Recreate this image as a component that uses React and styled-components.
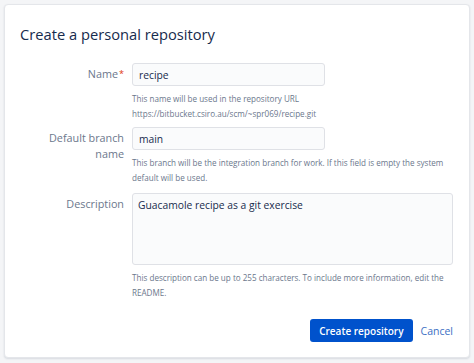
import React from 'react';
import styled, { createGlobalStyle } from 'styled-components';

const GlobalStyle = createGlobalStyle`
  html, body {
    margin: 0;
    padding: 0;
    background-color: #f4f5f7;
  }
  body {
    font-family: "Open Sans", "Noto Sans", sans-serif;
    color: #172b4d;
  }
`;

const Page = styled.div`
  padding: 4px;
`;

const Card = styled.div`
  width: 466px;
  height: 354px;
  box-sizing: border-box;
  background-color: #ffffff;
  border: solid 1px #e4e6ea;
  border-radius: 4px;
  box-shadow: 0 1px 2px rgba(9, 30, 66, 0.12);
  padding: 17px 16px 15px 15px;
  display: flex;
  flex-direction: column;
`;

const Title = styled.h1`
  margin: 0 0 17px 0;
  font-size: 14.7px;
  line-height: 24px;
  font-weight: 500;
  color: #172b4d;
`;

const FieldRow = styled.div`
  display: grid;
  grid-template-columns: 104px 1fr;
  column-gap: 8px;
  margin-bottom: ${(p) => p.gap || 0}px;
`;

const Label = styled.label`
  text-align: right;
  font-size: 10.8px;
  font-weight: 500;
  line-height: 16px;
  padding: 3px 0 0 20px;
  color: #6b778c;
`;

const Asterisk = styled.span`
  color: #de350b;
  font-size: 9px;
  vertical-align: top;
  margin-left: 1px;
`;

const Field = styled.div`
  display: flex;
  flex-direction: column;
`;

const Input = styled.input`
  width: ${(p) => p.width || 321}px;
  height: 23px;
  box-sizing: border-box;
  border: solid 1px #dfe1e6;
  border-radius: 3px;
  background-color: #fafbfc;
  padding: 0 6px;
  font-family: inherit;
  font-size: 10.3px;
  color: #172b4d;
  outline: none;
`;

const TextArea = styled.textarea`
  width: 321px;
  height: 72px;
  box-sizing: border-box;
  border: solid 1px #dfe1e6;
  border-radius: 3px;
  background-color: #fafbfc;
  padding: 3px 5px;
  font-family: inherit;
  font-size: 10.3px;
  line-height: 16px;
  color: #172b4d;
  resize: none;
  outline: none;
`;

const Hint = styled.div`
  margin-top: 5px;
  font-size: 8.1px;
  line-height: 15px;
  color: #6b778c;
`;

const Actions = styled.div`
  margin-top: auto;
  display: flex;
  justify-content: flex-end;
  align-items: center;
  gap: 8px;
`;

const PrimaryButton = styled.button`
  height: 23px;
  padding: 0 9px;
  border: none;
  border-radius: 3px;
  background-color: #0052cc;
  color: #ffffff;
  font-family: inherit;
  font-size: 10px;
  font-weight: 600;
  cursor: pointer;
`;

const LinkButton = styled.button`
  border: none;
  background: none;
  padding: 0;
  font-family: inherit;
  font-size: 10.5px;
  color: #3d6fc4;
  cursor: pointer;
`;

const App = () => (
  <Page>
    <GlobalStyle />
    <Card>
      <Title>Create a personal repository</Title>

      <FieldRow gap={6}>
        <Label htmlFor="repo-name">
          Name
          <Asterisk>*</Asterisk>
        </Label>
        <Field>
          <Input id="repo-name" width={193} defaultValue="recipe" />
          <Hint>
            This name will be used in the repository URL
            <br />
            https://bitbucket.csiro.au/scm/~spr069/recipe.git
          </Hint>
        </Field>
      </FieldRow>

      <FieldRow gap={8}>
        <Label htmlFor="repo-branch">Default branch name</Label>
        <Field>
          <Input id="repo-branch" width={193} defaultValue="main" />
          <Hint>
            This branch will be the integration branch for work. If this field is empty the system
            default will be used.
          </Hint>
        </Field>
      </FieldRow>

      <FieldRow>
        <Label htmlFor="repo-description">Description</Label>
        <Field>
          <TextArea id="repo-description" defaultValue="Guacamole recipe as a git exercise" />
          <Hint>
            This description can be up to 255 characters. To include more information, edit the
            README.
          </Hint>
        </Field>
      </FieldRow>

      <Actions>
        <PrimaryButton>Create repository</PrimaryButton>
        <LinkButton>Cancel</LinkButton>
      </Actions>
    </Card>
  </Page>
);

export default App;
